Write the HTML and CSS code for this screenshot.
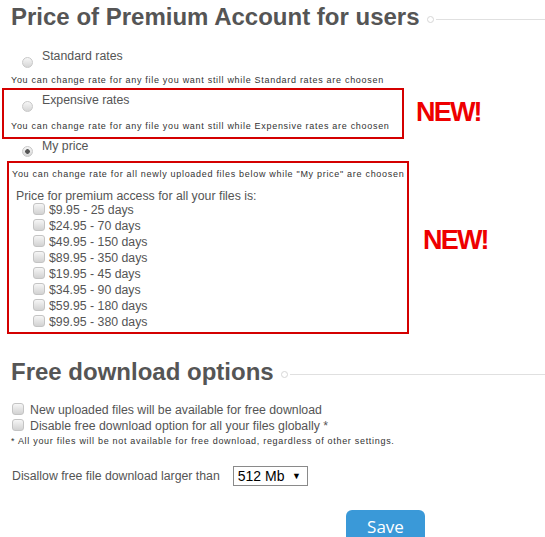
FILE: index.html
```html
<!DOCTYPE html>
<html lang="en">
<head>
    <meta charset="UTF-8">
    <title>Account settings</title>
    <link rel="stylesheet" href="styles.css">
</head>
<body>
<div class="page">

    <div class="section-title">
        <h2>Price of Premium Account for users</h2>
        <span class="dot"></span>
        <span class="rule"></span>
    </div>

    <div class="rate rate-standard">
        <label class="radio-row"><input type="radio" name="rate">Standard rates</label>
        <p class="hint">You can change rate for any file you want still while Standard rates are choosen</p>
    </div>

    <div class="new-row row-expensive">
        <div class="boxed box-expensive">
            <label class="radio-row"><input type="radio" name="rate">Expensive rates</label>
            <p class="hint">You can change rate for any file you want still while Expensive rates are choosen</p>
        </div>
        <span class="new new-1">NEW!</span>
    </div>

    <div class="rate rate-my">
        <label class="radio-row"><input type="radio" name="rate" checked>My price</label>
    </div>

    <div class="new-row">
        <div class="boxed box-price">
            <p class="hint">You can change rate for all newly uploaded files below while "My price" are choosen</p>
            <p class="price-title">Price for premium access for all your files is:</p>
            <ul class="price-list">
                <li><label><input type="checkbox">$9.95 - 25 days</label></li>
                <li><label><input type="checkbox">$24.95 - 70 days</label></li>
                <li><label><input type="checkbox">$49.95 - 150 days</label></li>
                <li><label><input type="checkbox">$89.95 - 350 days</label></li>
                <li><label><input type="checkbox">$19.95 - 45 days</label></li>
                <li><label><input type="checkbox">$34.95 - 90 days</label></li>
                <li><label><input type="checkbox">$59.95 - 180 days</label></li>
                <li><label><input type="checkbox">$99.95 - 380 days</label></li>
            </ul>
        </div>
        <span class="new new-2">NEW!</span>
    </div>

    <div class="section-title second">
        <h2>Free download options</h2>
        <span class="dot"></span>
        <span class="rule"></span>
    </div>

    <ul class="free-list">
        <li><label><input type="checkbox">New uploaded files will be available for free download</label></li>
        <li><label><input type="checkbox">Disable free download option for all your files globally *</label></li>
    </ul>
    <p class="hint note">* All your files will be not available for free download, regardless of other settings.</p>

    <div class="size-row">
        <span>Disallow free file download larger than</span>
        <span class="select-wrap">
            <select class="size-select">
                <option>512 Mb</option>
                <option>1024 Mb</option>
                <option>2048 Mb</option>
            </select>
        </span>
    </div>

    <div class="actions">
        <button class="save">Save</button>
    </div>

</div>
</body>
</html>
```

FILE: styles.css
```css
body {
    margin: 0;
    font-family: "Liberation Sans", Arial, sans-serif;
    color: #555;
    background: #fff;
    overflow: hidden;
}
.page {
    padding-top: 2px;
}
p, ul {
    margin: 0;
    padding: 0;
}
li {
    list-style: none;
}
label {
    cursor: pointer;
}

/* section headings */
.section-title {
    display: flex;
    align-items: center;
    padding-left: 11px;
}
.section-title h2 {
    margin: 0;
    font-size: 24px;
    font-weight: bold;
    color: #555;
    line-height: 30px;
}
.section-title .dot {
    box-sizing: border-box;
    width: 7px;
    height: 7px;
    border: 1px solid #d6d6d6;
    border-radius: 50%;
    margin: 4px 2px 0 7px;
}
.section-title .rule {
    flex: 1;
    height: 1px;
    background: #e0e0e0;
    margin-top: 4px;
}
.section-title.second {
    margin-top: 23px;
}

/* rates */
.rate {
    padding-left: 11px;
}
.rate-standard {
    margin-top: 17px;
}
.radio-row {
    display: flex;
    align-items: flex-start;
    font-size: 12.3px;
    line-height: 14px;
    padding-left: 11px;
}
.radio-row input {
    appearance: none;
    box-sizing: border-box;
    flex: none;
    width: 11px;
    height: 11px;
    margin: 8px 9px 7px 0;
    border: 1px solid #c8c8c8;
    border-radius: 50%;
    background: linear-gradient(#f6f6f6, #d6d6d6);
}
.radio-row input:checked {
    background: radial-gradient(circle, #555 0 2px, transparent 2.6px), linear-gradient(#f6f6f6, #d6d6d6);
}
.hint {
    font-size: 9px;
    line-height: 11px;
    letter-spacing: 0.7px;
    color: #333;
    white-space: nowrap;
}

.new-row {
    display: flex;
    align-items: flex-start;
}
.boxed {
    box-sizing: border-box;
    width: 402px;
    border: 2px solid #d40000;
}
.row-expensive {
    margin-top: 2px;
}
.box-expensive {
    margin-left: 2px;
    padding: 3px 0 5px 7px;
}
.box-expensive .radio-row input {
    margin-bottom: 9px;
}
.rate-my .radio-row input {
    margin: 7px 9px 4px 0;
}
.box-price {
    margin-left: 7px;
    padding: 6px 0 2px 3px;
}
.new {
    color: #e00;
    font-family: "Liberation Sans", Arial, sans-serif;
    font-weight: bold;
    font-size: 27px;
    line-height: 27px;
    letter-spacing: -1.8px;
}
.new-1 {
    margin: 11px 0 0 12px;
}
.new-2 {
    margin: 66px 0 0 14px;
}

.price-title {
    font-size: 12.3px;
    line-height: 12px;
    margin: 10px 0 0 4px;
}
.price-list {
    padding-left: 21px;
}
.price-list li, .free-list li {
    font-size: 12.3px;
    line-height: 16px;
}
.price-list label, .free-list label {
    display: flex;
    align-items: flex-start;
}
.price-list input, .free-list input {
    appearance: none;
    box-sizing: border-box;
    flex: none;
    width: 12px;
    height: 12px;
    margin: 1px 4px 0 0;
    border: 1px solid #c4c4c4;
    border-radius: 3px;
    background: linear-gradient(#f6f6f6, #d2d2d2);
}

/* free download */
.free-list {
    margin-top: 15px;
    padding-left: 12px;
}
.free-list input {
    margin-right: 6px;
}
.note {
    margin-top: 2px;
    padding-left: 11px;
}
.size-row {
    display: flex;
    align-items: center;
    padding-left: 12px;
    margin-top: 19px;
    font-size: 12.3px;
}
.select-wrap {
    position: relative;
    margin-left: 13px;
}
.select-wrap::after {
    content: "\25BC";
    position: absolute;
    right: 7px;
    top: 5px;
    font-size: 9px;
    color: #000;
    pointer-events: none;
}
.size-select {
    appearance: none;
    display: block;
    box-sizing: border-box;
    width: 75px;
    height: 20px;
    padding: 0 0 0 4px;
    font-family: "Liberation Sans", Arial, sans-serif;
    font-size: 14px;
    color: #000;
    border: 1px solid #8a8a8a;
    border-radius: 0;
    background: #fff;
}
.actions {
    padding-left: 346px;
    margin-top: 24px;
}
.save {
    display: block;
    width: 79px;
    height: 36px;
    border: none;
    border-radius: 6px 6px 0 0;
    background: #3a99d8;
    color: #fff;
    font-family: "Open Sans", sans-serif;
    font-size: 17px;
    padding: 0 0 4px;
}
```
